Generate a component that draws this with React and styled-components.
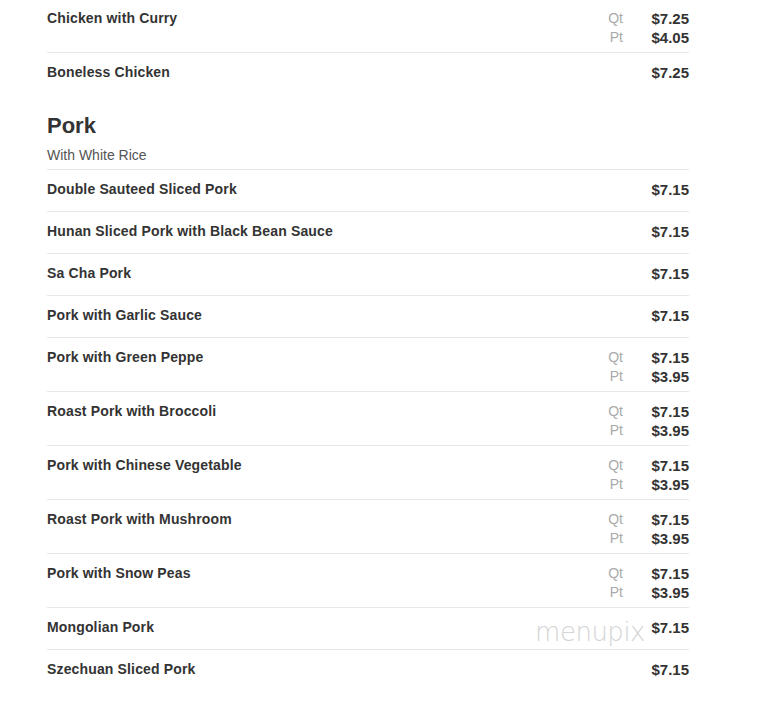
import React from "react";
import styled, { createGlobalStyle } from "styled-components";

const Global = createGlobalStyle`
	html, body {
		margin: 0;
		padding: 0;
		background: #fff;
	}
	body {
		font-family: "Liberation Sans", Arial, sans-serif;
		color: #333;
	}
`;

const Page = styled.div`
	width: 642px;
	margin-left: 47px;
	position: relative;
`;

const Section = styled.section`
	margin-top: ${p => (p.first ? "0" : "19px")};
`;

const Heading = styled.h2`
	margin: 0;
	font-size: 22px;
	line-height: 26px;
	font-weight: bold;
	color: #333;
`;

const Sub = styled.p`
	margin: 7px 0 5px;
	font-size: 14px;
	line-height: 18px;
	color: #555;
`;

const Row = styled.div`
	display: flex;
	justify-content: space-between;
	align-items: flex-start;
	border-top: ${p => (p.noBorder ? "none" : "1px solid #e8e8e8")};
	padding: ${p => (p.noBorder ? "9px" : "10px")} 0 5px;
	min-height: 26px;
	box-sizing: content-box;
`;

const Name = styled.div`
	font-size: 14px;
	font-weight: bold;
	line-height: 19px;
	color: #333;
	letter-spacing: 0.15px;
`;

const Prices = styled.div`
	display: grid;
	grid-template-columns: auto 52px;
	column-gap: 14px;
	align-items: center;
`;

const Label = styled.span`
	font-size: 14px;
	line-height: 19px;
	color: #aaa;
	text-align: right;
`;

const Price = styled.span`
	font-size: 15px;
	line-height: 19px;
	font-weight: bold;
	color: #333;
	text-align: right;
`;

const Watermark = styled.div`
	position: absolute;
	right: 44px;
	bottom: 44px;
	font-family: "DejaVu Sans", sans-serif;
	font-weight: 200;
	font-size: 26px;
	letter-spacing: -0.5px;
	color: #d4d4d4;
	pointer-events: none;
`;

const sections = [
	{
		items: [
			{ name: "Chicken with Curry", qt: "$7.25", pt: "$4.05" },
			{ name: "Boneless Chicken", price: "$7.25" }
		]
	},
	{
		title: "Pork",
		sub: "With White Rice",
		items: [
			{ name: "Double Sauteed Sliced Pork", price: "$7.15" },
			{ name: "Hunan Sliced Pork with Black Bean Sauce", price: "$7.15" },
			{ name: "Sa Cha Pork", price: "$7.15" },
			{ name: "Pork with Garlic Sauce", price: "$7.15" },
			{ name: "Pork with Green Peppe", qt: "$7.15", pt: "$3.95" },
			{ name: "Roast Pork with Broccoli", qt: "$7.15", pt: "$3.95" },
			{ name: "Pork with Chinese Vegetable", qt: "$7.15", pt: "$3.95" },
			{ name: "Roast Pork with Mushroom", qt: "$7.15", pt: "$3.95" },
			{ name: "Pork with Snow Peas", qt: "$7.15", pt: "$3.95" },
			{ name: "Mongolian Pork", price: "$7.15" },
			{ name: "Szechuan Sliced Pork", price: "$7.15" }
		]
	}
];

export default function App() {
	return (
		<Page>
			<Global />
			{sections.map((sec, si) => (
				<Section key={si} first={si === 0}>
					{sec.title && <Heading>{sec.title}</Heading>}
					{sec.sub && <Sub>{sec.sub}</Sub>}
					{sec.items.map((it, i) => (
						<Row key={it.name} noBorder={si === 0 && i === 0}>
							<Name>{it.name}</Name>
							<Prices>
								{it.price ? (
									<>
										<Label />
										<Price>{it.price}</Price>
									</>
								) : (
									<>
										<Label>Qt</Label>
										<Price>{it.qt}</Price>
										<Label>Pt</Label>
										<Price>{it.pt}</Price>
									</>
								)}
							</Prices>
						</Row>
					))}
				</Section>
			))}
			<Watermark>menupix</Watermark>
		</Page>
	);
}
